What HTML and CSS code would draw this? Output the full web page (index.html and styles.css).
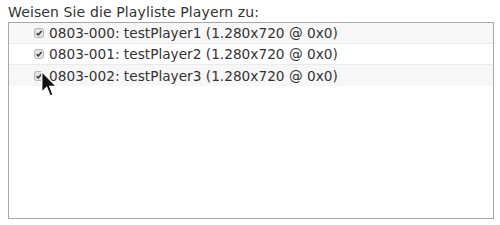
FILE: index.html
```html
<!DOCTYPE html>
<html lang="de">
<head>
  <meta charset="UTF-8" />
  <title>Playliste zuweisen</title>
  <link rel="stylesheet" href="styles.css">
</head>
<body>
  <div class="assign">
    <label class="assign-title">Weisen Sie die Playliste Playern zu:</label>
    <ul class="player-list">
      <li class="player-row">
        <span class="check"><svg viewBox="0 0 10 10" width="10" height="10"><rect x="0.5" y="0.5" width="9" height="9" rx="2" fill="#e4e4e4" stroke="#b5b5b5"/><path d="M2.6 5.2 L4.3 6.9 L7.6 2.9" fill="none" stroke="#3a3a3a" stroke-width="1.6"/></svg></span>
        0803-000: testPlayer1 (1.280x720 @ 0x0)
      </li>
      <li class="player-row">
        <span class="check"><svg viewBox="0 0 10 10" width="10" height="10"><rect x="0.5" y="0.5" width="9" height="9" rx="2" fill="#e4e4e4" stroke="#b5b5b5"/><path d="M2.6 5.2 L4.3 6.9 L7.6 2.9" fill="none" stroke="#3a3a3a" stroke-width="1.6"/></svg></span>
        0803-001: testPlayer2 (1.280x720 @ 0x0)
      </li>
      <li class="player-row">
        <span class="check"><svg viewBox="0 0 10 10" width="10" height="10"><rect x="0.5" y="0.5" width="9" height="9" rx="2" fill="#e4e4e4" stroke="#b5b5b5"/><path d="M2.6 5.2 L4.3 6.9 L7.6 2.9" fill="none" stroke="#3a3a3a" stroke-width="1.6"/></svg></span>
        0803-002: testPlayer3 (1.280x720 @ 0x0)
        <svg class="cursor" viewBox="0 0 13 21" width="17" height="27"><path d="M0.5 0.5 L0.5 16.5 L4.3 12.8 L7 19.5 L9.3 18.5 L6.7 12 L12 12 Z" fill="#111" stroke="#fff" stroke-width="1"/></svg>
      </li>
    </ul>
  </div>
</body>
</html>
```

FILE: styles.css
```css
* {
  box-sizing: border-box;
  margin: 0; padding: 0;
}
body {
  font-family: 'DejaVu Sans', sans-serif;
  font-size: 14px;
  color: #333;
  background: #fff;
  padding: 4px 6px 7px 8px;
}

.assign-title {
  display: block;
  line-height: 17px;
  margin-bottom: 1px;
  letter-spacing: 0.12px;
}

.player-list {
  list-style: none;
  border: 1px solid #a8a8a8;
  height: 197px;
}
.player-row {
  position: relative;
  display: flex;
  align-items: center;
  height: 21px;
  padding-left: 25px;
  font-size: 13.7px;
  border-bottom: 1px solid #ebebeb;
}
.player-row:nth-child(odd) {
  background: #f7f7f7;
}
.player-row:last-child {
  border-bottom: none;
}
.check {
  display: flex;
  margin-right: 5px;
}
.cursor {
  position: absolute;
  left: 32px;
  top: 6px;
}
```
